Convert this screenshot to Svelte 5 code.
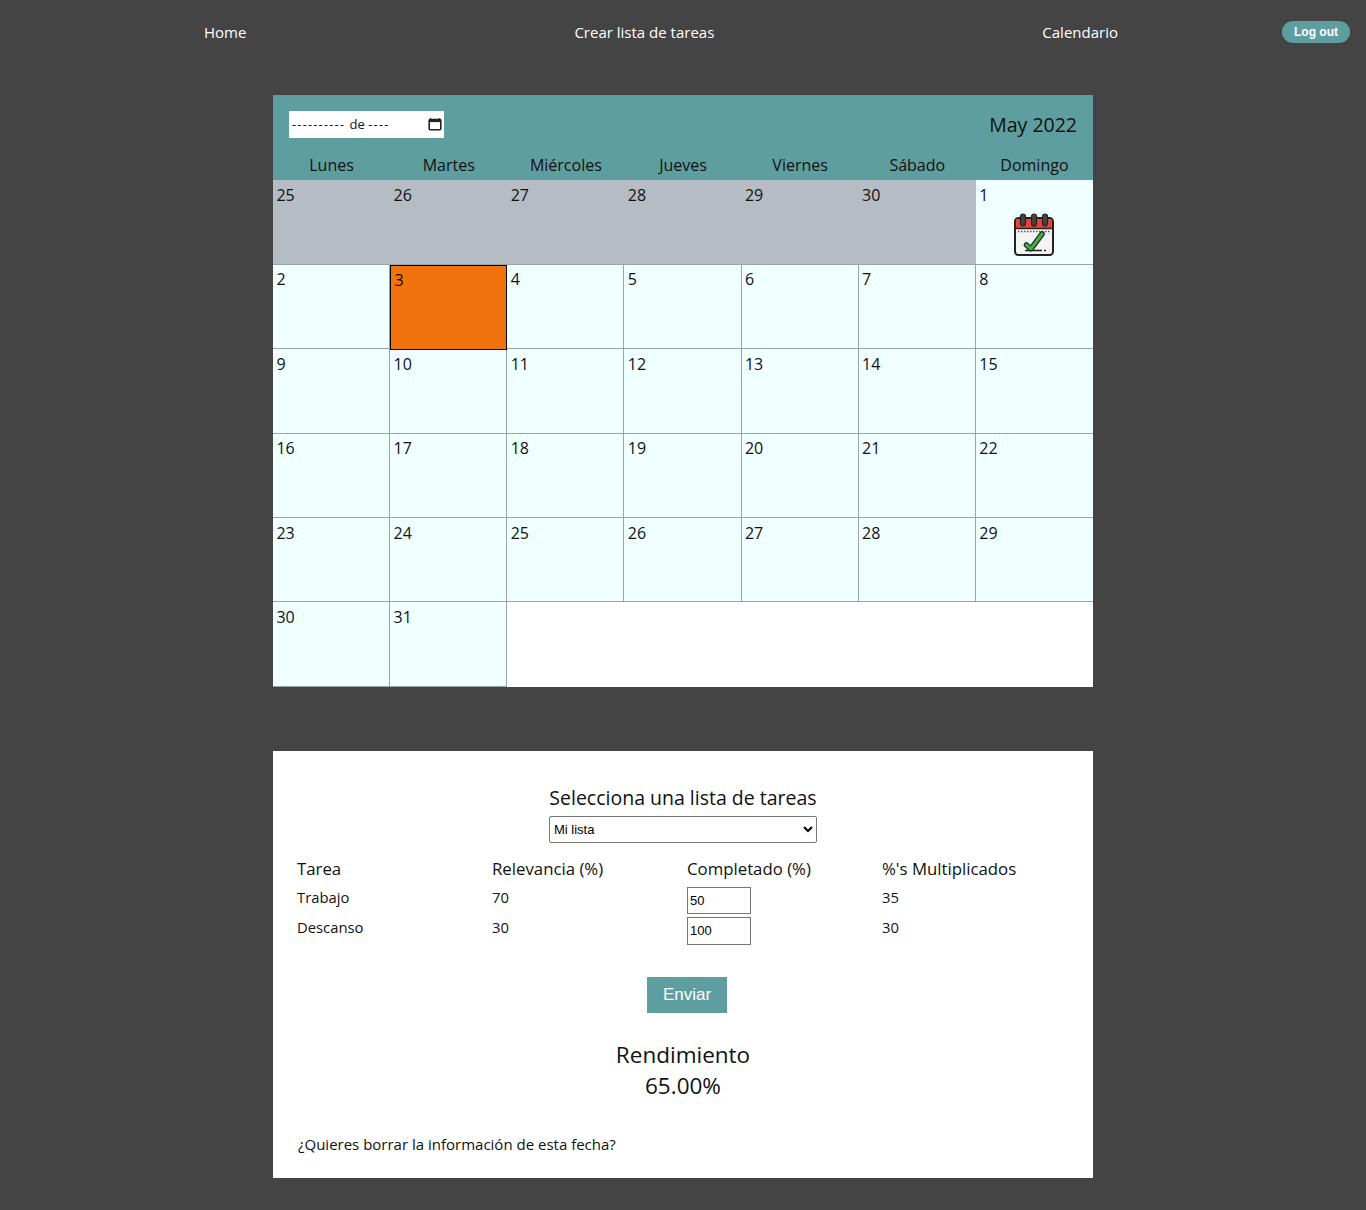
<script>
    const weekdays = ["Lunes", "Martes", "Miércoles", "Jueves", "Viernes", "Sábado", "Domingo"];

    const previous = [25, 26, 27, 28, 29, 30];
    const days = Array.from({ length: 31 }, (_, i) => i + 1);
    const today = 3;

    const tasks = [
        { name: "Trabajo", relevance: 70, done: 50, product: 35 },
        { name: "Descanso", relevance: 30, done: 100, product: 30 },
    ];
</script>

<nav class="topbar">
    <div class="links">
        <span>Home</span>
        <span>Crear lista de tareas</span>
        <span>Calendario</span>
    </div>
    <button class="logout">Log out</button>
</nav>

<main>
    <section class="calendar">
        <header>
            <div class="toolbar">
                <div class="month-input">
                    <span><span class="dash">----------</span> de <span class="dash">----</span></span>
                    <svg viewBox="0 0 14 14" width="14" height="14">
                        <path d="M2.5 1v2M11.5 1v2" stroke="#444" stroke-width="1.6" fill="none" />
                        <rect x="1.2" y="2.5" width="11.6" height="10.3" rx="1" fill="none" stroke="#222" stroke-width="1.6" />
                        <rect x="1.2" y="2.5" width="11.6" height="2.6" fill="#222" />
                    </svg>
                </div>
                <div class="current">May 2022</div>
            </div>
            <div class="weekdays">
                {#each weekdays as day}
                    <div>{day}</div>
                {/each}
            </div>
        </header>

        <div class="grid">
            {#each previous as day}
                <div class="cell muted">{day}</div>
            {/each}
            {#each days as day}
                <div class="cell" class:today={day === today}>
                    {day}
                    {#if day === 1}
                        <svg class="badge" viewBox="0 0 42 44" width="42" height="44">
                            <rect x="2" y="5" width="38" height="37" rx="3.5" fill="#f4f4f4" stroke="#222" stroke-width="2" />
                            <path d="M3 15V8.5A2.5 2.5 0 0 1 5.5 6h31A2.5 2.5 0 0 1 39 8.5V15z" fill="#ee4036" />
                            <path d="M2 15.5h38" stroke="#222" stroke-width="1.5" />
                            <path d="M5 18.5h32" stroke="#555" stroke-width="1.5" stroke-dasharray="1.5 1.5" />
                            <rect x="7.5" y="1" width="5" height="12" rx="2.5" fill="#444" stroke="#222" stroke-width="1.2" />
                            <rect x="18.5" y="1" width="5" height="12" rx="2.5" fill="#444" stroke="#222" stroke-width="1.2" />
                            <rect x="29.5" y="1" width="5" height="12" rx="2.5" fill="#444" stroke="#222" stroke-width="1.2" />
                            <path d="M12 37.5h17M31 37.5h2" stroke="#222" stroke-width="1.5" />
                            <path d="M13.5 32l4.500 3.800L29 21" fill="none" stroke="#222" stroke-width="5.500" stroke-linecap="round" stroke-linejoin="round" />
                            <path d="M13.5 32l4.500 3.800L29 21" fill="none" stroke="#3fae49" stroke-width="3.200" stroke-linecap="round" stroke-linejoin="round" />
                        </svg>
                    {/if}
                </div>
            {/each}
        </div>
    </section>

    <section class="summary">
        <div class="picker">
            <h2>Selecciona una lista de tareas</h2>
            <select>
                <option>Mi lista</option>
            </select>
        </div>

        <div class="table">
            <div class="heading">Tarea</div>
            <div class="heading">Relevancia (%)</div>
            <div class="heading">Completado (%)</div>
            <div class="heading">%'s Multiplicados</div>
            {#each tasks as task}
                <div>{task.name}</div>
                <div>{task.relevance}</div>
                <div class="field"><input type="text" value={task.done} /></div>
                <div>{task.product}</div>
            {/each}
        </div>

        <div class="send"><button>Enviar</button></div>

        <div class="result">
            <div>Rendimiento</div>
            <div class="score">65.00%</div>
        </div>

        <p class="delete">¿Quieres borrar la información de esta fecha?</p>
    </section>
</main>

<style>
    :global(body) {
        background: #444444;
        font-family: "Open Sans", "Noto Sans", sans-serif;
        color: #111;
    }

    .topbar {
        display: flex;
        align-items: center;
        height: 64px;
        padding: 0 16px 0 40px;
    }

    .links {
        display: flex;
        flex: 1;
        justify-content: space-around;
        color: #fff;
        font-size: 15px;
    }

    .logout {
        width: 68px;
        height: 22px;
        padding: 0;
        border: none;
        border-radius: 11px;
        background: #5f9ea0;
        color: #fff;
        font-family: "Liberation Sans", sans-serif;
        font-size: 12px;
        font-weight: 700;
    }

    main {
        display: flex;
        flex-direction: column;
        gap: 64.15px;
        width: 820px;
        margin: 31px auto 0;
    }

    .calendar {
        background: #fff;
    }

    header {
        background: #5f9ea0;
    }

    .toolbar {
        display: flex;
        align-items: center;
        justify-content: space-between;
        height: 58px;
        padding: 0 16px;
    }

    .month-input {
        display: flex;
        align-items: center;
        justify-content: space-between;
        width: 155px;
        height: 27px;
        padding: 0 2px 0 3px;
        box-sizing: border-box;
        background: #fff;
        font-size: 13px;
    }

    .dash {
        margin: 0 1px 0 0;
        font-size: 12.5px;
        letter-spacing: 1.3px;
    }

    .current {
        font-size: 19.5px;
    }

    .weekdays {
        display: grid;
        grid-template-columns: repeat(7, 1fr);
        height: 27.17px;
        font-size: 16px;
        line-height: 24px;
        text-align: center;
    }

    .grid {
        display: grid;
        grid-template-columns: repeat(7, 1fr);
        grid-auto-rows: 84.46px;
    }

    .cell {
        box-sizing: border-box;
        position: relative;
        padding: 4.6px 3.4px;
        background: #f0ffff;
        border-right: 1px solid #9aa5a8;
        border-bottom: 1px solid #9aa5a8;
        font-size: 16px;
        line-height: 20px;
    }

    .cell:nth-child(7n) {
        border-right: none;
    }

    .muted {
        background: #b5bcc4;
        border-right: none;
    }

    .today {
        z-index: 1;
        margin-bottom: -1px;
        background: #f0730e;
        border: 1px solid #000;
    }

    .badge {
        position: absolute;
        left: 37px;
        top: 33px;
    }

    .summary {
        display: flex;
        flex-direction: column;
        height: 427px;
        box-sizing: border-box;
        padding: 33px 0 0 24px;
        background: #fff;
    }

    .picker {
        display: flex;
        flex-direction: column;
        align-items: center;
        width: 772px;
    }

    h2 {
        margin: 0;
        font-size: 19.5px;
        font-weight: 400;
        line-height: 28px;
    }

    select {
        width: 268px;
        height: 27px;
        margin-top: 4px;
        background: #fff;
        border: 1px solid #767676;
        border-radius: 2px;
        font-family: "Liberation Sans", sans-serif;
        font-size: 13px;
    }

    .table {
        display: grid;
        grid-template-columns: repeat(4, 195px);
        grid-auto-rows: 30.5px;
        margin-top: 12px;
        font-size: 14.8px;
        line-height: 23px;
    }

    .heading {
        font-size: 16.8px;
        line-height: 28px;
    }

    .field {
        padding-top: 1px;
    }

    input {
        box-sizing: border-box;
        width: 64px;
        height: 27.5px;
        padding: 1px 2px;
        border: 1px solid #767676;
        font-family: "Liberation Sans", sans-serif;
        font-size: 13px;
    }

    .send {
        display: flex;
        justify-content: center;
        width: 780px;
        margin-top: 30px;
    }

    .send button {
        width: 80px;
        height: 36px;
        padding: 0;
        border: none;
        background: #5f9ea0;
        color: #fff;
        font-family: "Liberation Sans", sans-serif;
        font-size: 17px;
    }

    .result {
        width: 772px;
        margin-top: 26px;
        font-size: 22.5px;
        line-height: 31.5px;
        text-align: center;
    }

    .delete {
        margin: 32px 0 0 1px;
        font-size: 15px;
        line-height: 20px;
    }
</style>
